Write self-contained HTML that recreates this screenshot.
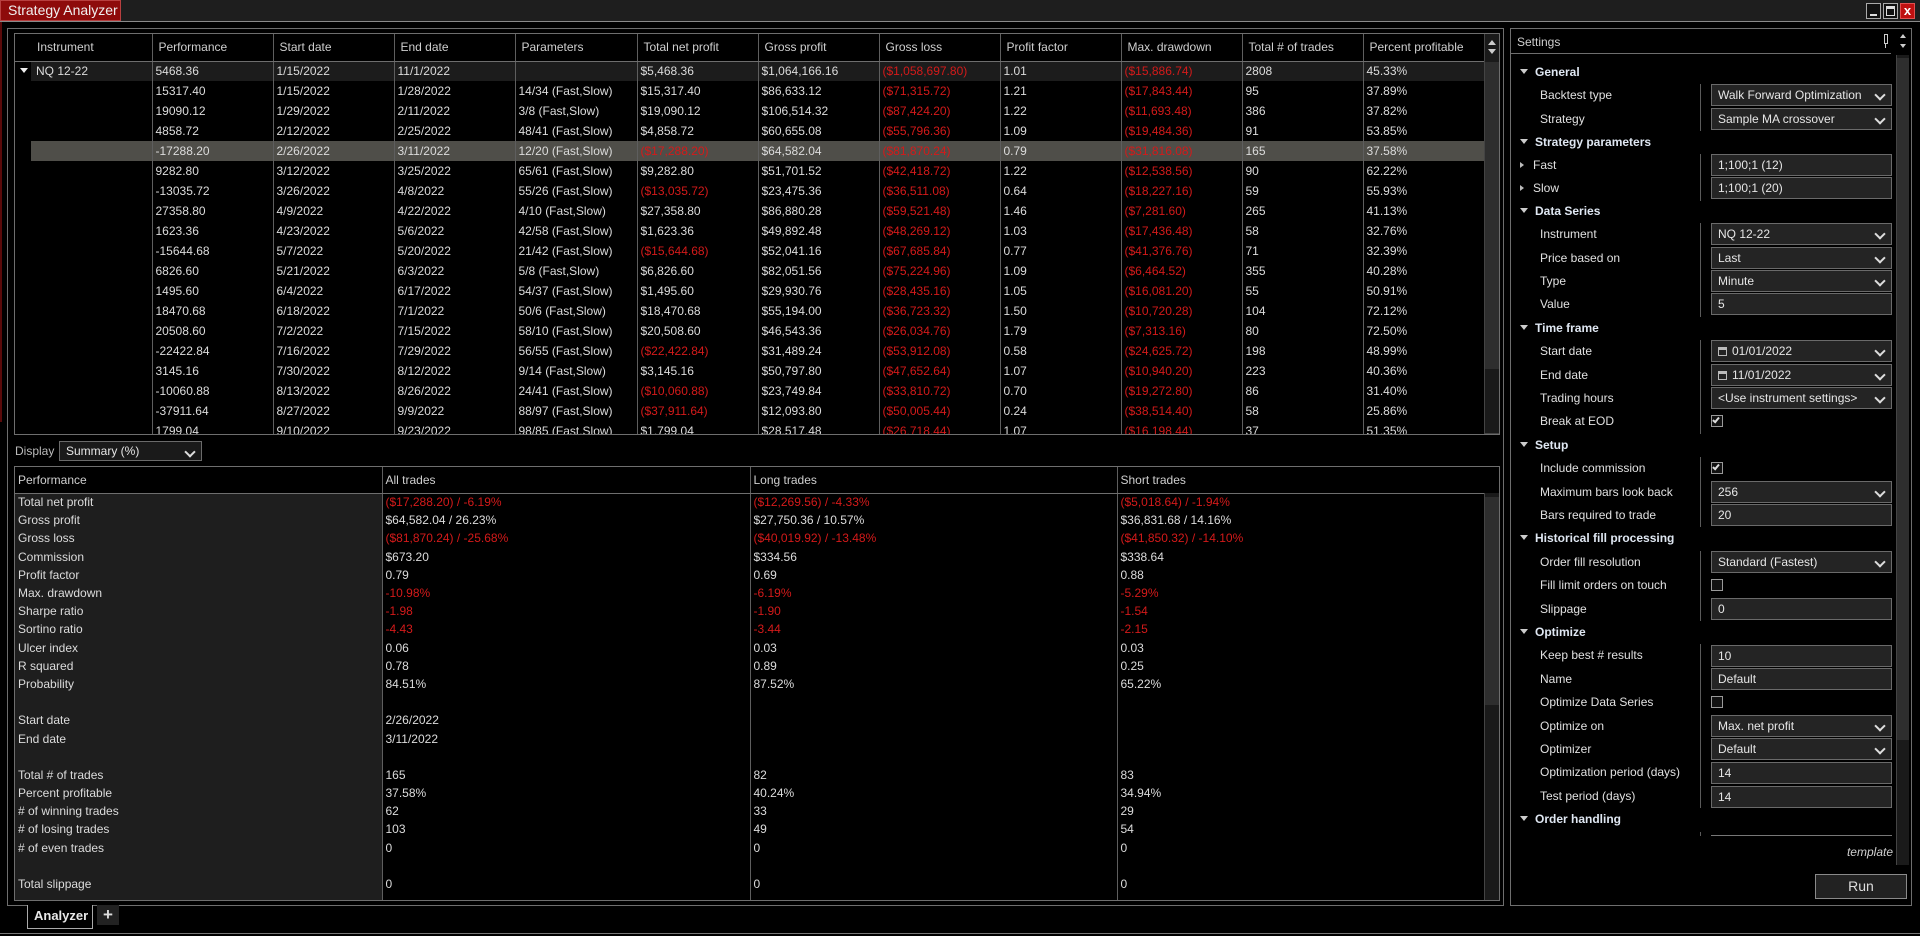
<!DOCTYPE html>
<html><head><meta charset="utf-8"><style>
*{box-sizing:border-box;margin:0;padding:0}
body{width:1920px;height:936px;background:#000;font-family:"Liberation Sans",Arial,sans-serif;font-size:12px;color:#dcdcdc;position:relative;overflow:hidden}
.abs{position:absolute}
.titlebar{left:0;top:0;width:1920px;height:22px;background:#1e1e1e;border-bottom:1px solid #8a8a8a}
.tab{left:0;top:0;width:121px;height:21px;background:#8e0b0b;border:1px solid #b84040;color:#f0f0f0;font-size:14px;line-height:19px;padding-left:7px}
.wb{top:3px;width:15px;height:16px;border:1px solid #aaa;background:#111}
.frame{border:1px solid #6e6e6e}
table{border-collapse:collapse;table-layout:fixed}
td{white-space:nowrap;overflow:hidden;padding-left:3px;border-left:1px solid #5e5e5e}
td:first-child{border-left:none}
.tt tr{height:20px}
.tt thead tr{height:27px}
.tt th{font-weight:normal;text-align:left;color:#cfcfcf;padding-left:6px;border-left:1px solid #5e5e5e;border-bottom:1px solid #6e6e6e}
.tt th:first-child{border-left:none;padding-left:22px}
.r{color:#d41a1a}
.first td{background:#1c1c1c}
.first td:first-child{background:linear-gradient(90deg,#000 16px,#1c1c1c 16px)}
.sel td{background:#4f4e49}
.sel td:first-child{background:linear-gradient(90deg,#000 16px,#4f4e49 16px)}
.bt tr{height:18.2px}
.bt thead tr{height:26px}
.bt th{font-weight:normal;text-align:left;color:#cfcfcf;padding-left:3px;border-left:1px solid #5e5e5e;border-bottom:1px solid #6e6e6e}
.bt th:first-child{border-left:none}
.bt td:first-child{padding-left:3px}
.sb{background:#1a1a1a;border-left:1px solid #444}
.thumb{background:#2e2e2e}
.sec{left:1520px;color:#dfe7f2;font-weight:bold;height:20px;line-height:20px}
.sec:before{content:"";display:inline-block;border-left:4px solid transparent;border-right:4px solid transparent;border-top:5px solid #ccc;margin-right:7px;vertical-align:2px}
.lab{left:1540px;height:20px;line-height:20px;color:#e0e0e0}
.inp{left:1711px;width:181px;height:22px;background:#242424;border:1px solid #6a6a6a;line-height:20px;padding-left:6px;color:#e6e6e6}
.sel2:after{content:"";position:absolute;right:7px;top:6px;width:6px;height:6px;border-right:2px solid #ddd;border-bottom:2px solid #ddd;transform:rotate(45deg)}
.cb{left:1711px;width:12px;height:12px;border:1px solid #999;background:#111}
.vs{left:1700px;width:1px;background:#5a5a5a}
.cal{display:inline-block;width:9px;height:9px;border:1px solid #bbb;border-top:3px solid #bbb;margin-right:5px;vertical-align:-1px}
</style></head><body>
<div class="abs titlebar"></div>
<div class="abs tab">Strategy Analyzer</div>
<div class="abs wb" style="left:1866px"><div class="abs" style="left:3px;top:10px;width:7px;height:2px;background:#ddd"></div></div>
<div class="abs wb" style="left:1883px"><div class="abs" style="left:2px;top:2px;width:9px;height:10px;border:1px solid #ddd;border-top:3px solid #ddd"></div></div>
<div class="abs wb" style="left:1900px;background:#c01010;border-color:#e05050;color:#fff;font-weight:bold;font-size:13px;line-height:14px;text-align:center">x</div>
<div class="abs" style="left:0;top:22px;width:2px;height:400px;background:#5a0a0a"></div>

<!-- left panel -->
<div class="abs frame" style="left:7px;top:28px;width:1497px;height:878px"></div>
<div class="abs frame" style="left:14px;top:33px;width:1486px;height:402px;overflow:hidden">
<table class="tt" style="width:1469px">
<colgroup><col style="width:137px"><col style="width:121px"><col style="width:121px"><col style="width:121px"><col style="width:122px"><col style="width:121px"><col style="width:121px"><col style="width:121px"><col style="width:121px"><col style="width:121px"><col style="width:121px"><col style="width:121px"></colgroup>
<thead><tr><th>Instrument</th><th>Performance</th><th>Start date</th><th>End date</th><th>Parameters</th><th>Total net profit</th><th>Gross profit</th><th>Gross loss</th><th>Profit factor</th><th>Max. drawdown</th><th>Total # of trades</th><th>Percent profitable</th></tr></thead>
<tbody>
<tr class="first"><td style="padding-left:5px"><span style="display:inline-block;border-left:4px solid transparent;border-right:4px solid transparent;border-top:5px solid #eee;margin-right:8px;vertical-align:2px"></span>NQ 12-22</td><td>5468.36</td><td>1/15/2022</td><td>11/1/2022</td><td></td><td>$5,468.36</td><td>$1,064,166.16</td><td class="r">($1,058,697.80)</td><td>1.01</td><td class="r">($15,886.74)</td><td>2808</td><td>45.33%</td></tr>
<tr><td></td><td>15317.40</td><td>1/15/2022</td><td>1/28/2022</td><td>14/34 (Fast,Slow)</td><td>$15,317.40</td><td>$86,633.12</td><td class="r">($71,315.72)</td><td>1.21</td><td class="r">($17,843.44)</td><td>95</td><td>37.89%</td></tr>
<tr><td></td><td>19090.12</td><td>1/29/2022</td><td>2/11/2022</td><td>3/8 (Fast,Slow)</td><td>$19,090.12</td><td>$106,514.32</td><td class="r">($87,424.20)</td><td>1.22</td><td class="r">($11,693.48)</td><td>386</td><td>37.82%</td></tr>
<tr><td></td><td>4858.72</td><td>2/12/2022</td><td>2/25/2022</td><td>48/41 (Fast,Slow)</td><td>$4,858.72</td><td>$60,655.08</td><td class="r">($55,796.36)</td><td>1.09</td><td class="r">($19,484.36)</td><td>91</td><td>53.85%</td></tr>
<tr class="sel"><td></td><td>-17288.20</td><td>2/26/2022</td><td>3/11/2022</td><td>12/20 (Fast,Slow)</td><td class="r">($17,288.20)</td><td>$64,582.04</td><td class="r">($81,870.24)</td><td>0.79</td><td class="r">($31,816.08)</td><td>165</td><td>37.58%</td></tr>
<tr><td></td><td>9282.80</td><td>3/12/2022</td><td>3/25/2022</td><td>65/61 (Fast,Slow)</td><td>$9,282.80</td><td>$51,701.52</td><td class="r">($42,418.72)</td><td>1.22</td><td class="r">($12,538.56)</td><td>90</td><td>62.22%</td></tr>
<tr><td></td><td>-13035.72</td><td>3/26/2022</td><td>4/8/2022</td><td>55/26 (Fast,Slow)</td><td class="r">($13,035.72)</td><td>$23,475.36</td><td class="r">($36,511.08)</td><td>0.64</td><td class="r">($18,227.16)</td><td>59</td><td>55.93%</td></tr>
<tr><td></td><td>27358.80</td><td>4/9/2022</td><td>4/22/2022</td><td>4/10 (Fast,Slow)</td><td>$27,358.80</td><td>$86,880.28</td><td class="r">($59,521.48)</td><td>1.46</td><td class="r">($7,281.60)</td><td>265</td><td>41.13%</td></tr>
<tr><td></td><td>1623.36</td><td>4/23/2022</td><td>5/6/2022</td><td>42/58 (Fast,Slow)</td><td>$1,623.36</td><td>$49,892.48</td><td class="r">($48,269.12)</td><td>1.03</td><td class="r">($17,436.48)</td><td>58</td><td>32.76%</td></tr>
<tr><td></td><td>-15644.68</td><td>5/7/2022</td><td>5/20/2022</td><td>21/42 (Fast,Slow)</td><td class="r">($15,644.68)</td><td>$52,041.16</td><td class="r">($67,685.84)</td><td>0.77</td><td class="r">($41,376.76)</td><td>71</td><td>32.39%</td></tr>
<tr><td></td><td>6826.60</td><td>5/21/2022</td><td>6/3/2022</td><td>5/8 (Fast,Slow)</td><td>$6,826.60</td><td>$82,051.56</td><td class="r">($75,224.96)</td><td>1.09</td><td class="r">($6,464.52)</td><td>355</td><td>40.28%</td></tr>
<tr><td></td><td>1495.60</td><td>6/4/2022</td><td>6/17/2022</td><td>54/37 (Fast,Slow)</td><td>$1,495.60</td><td>$29,930.76</td><td class="r">($28,435.16)</td><td>1.05</td><td class="r">($16,081.20)</td><td>55</td><td>50.91%</td></tr>
<tr><td></td><td>18470.68</td><td>6/18/2022</td><td>7/1/2022</td><td>50/6 (Fast,Slow)</td><td>$18,470.68</td><td>$55,194.00</td><td class="r">($36,723.32)</td><td>1.50</td><td class="r">($10,720.28)</td><td>104</td><td>72.12%</td></tr>
<tr><td></td><td>20508.60</td><td>7/2/2022</td><td>7/15/2022</td><td>58/10 (Fast,Slow)</td><td>$20,508.60</td><td>$46,543.36</td><td class="r">($26,034.76)</td><td>1.79</td><td class="r">($7,313.16)</td><td>80</td><td>72.50%</td></tr>
<tr><td></td><td>-22422.84</td><td>7/16/2022</td><td>7/29/2022</td><td>56/55 (Fast,Slow)</td><td class="r">($22,422.84)</td><td>$31,489.24</td><td class="r">($53,912.08)</td><td>0.58</td><td class="r">($24,625.72)</td><td>198</td><td>48.99%</td></tr>
<tr><td></td><td>3145.16</td><td>7/30/2022</td><td>8/12/2022</td><td>9/14 (Fast,Slow)</td><td>$3,145.16</td><td>$50,797.80</td><td class="r">($47,652.64)</td><td>1.07</td><td class="r">($10,940.20)</td><td>223</td><td>40.36%</td></tr>
<tr><td></td><td>-10060.88</td><td>8/13/2022</td><td>8/26/2022</td><td>24/41 (Fast,Slow)</td><td class="r">($10,060.88)</td><td>$23,749.84</td><td class="r">($33,810.72)</td><td>0.70</td><td class="r">($19,272.80)</td><td>86</td><td>31.40%</td></tr>
<tr><td></td><td>-37911.64</td><td>8/27/2022</td><td>9/9/2022</td><td>88/97 (Fast,Slow)</td><td class="r">($37,911.64)</td><td>$12,093.80</td><td class="r">($50,005.44)</td><td>0.24</td><td class="r">($38,514.40)</td><td>58</td><td>25.86%</td></tr>
<tr><td></td><td>1799.04</td><td>9/10/2022</td><td>9/23/2022</td><td>98/85 (Fast,Slow)</td><td>$1,799.04</td><td>$28,517.48</td><td class="r">($26,718.44)</td><td>1.07</td><td class="r">($16,198.44)</td><td>37</td><td>51.35%</td></tr>
</tbody></table>
<div class="abs sb" style="left:1469px;top:0;width:15px;height:400px;border-bottom:1px solid #444"></div>
<div class="abs thumb" style="left:1470px;top:28px;width:14px;height:307px"></div>
<div class="abs" style="left:1473px;top:6px;border-left:4px solid transparent;border-right:4px solid transparent;border-bottom:5px solid #ccc"></div>
<div class="abs" style="left:1473px;top:15px;border-left:4px solid transparent;border-right:4px solid transparent;border-top:5px solid #ccc"></div>
</div>

<div class="abs" style="left:15px;top:443px;color:#bbb;line-height:16px">Display</div>
<div class="abs inp sel2" style="left:59px;top:441px;width:143px;height:20px;line-height:18px;background:#1a1a1a">Summary (%)</div>

<div class="abs frame" style="left:14px;top:466px;width:1486px;height:435px;overflow:hidden">
<div class="abs" style="left:0;top:0;width:367px;height:435px;background:#1e1e1e"></div>
<table class="bt abs" style="left:0;top:0;width:1469px">
<colgroup><col style="width:367px"><col style="width:368px"><col style="width:367px"><col style="width:367px"></colgroup>
<thead><tr style="background:#000"><th>Performance</th><th>All trades</th><th>Long trades</th><th>Short trades</th></tr></thead>
<tbody>
<tr><td>Total net profit</td><td class="r">($17,288.20) / -6.19%</td><td class="r">($12,269.56) / -4.33%</td><td class="r">($5,018.64) / -1.94%</td></tr>
<tr><td>Gross profit</td><td>$64,582.04 / 26.23%</td><td>$27,750.36 / 10.57%</td><td>$36,831.68 / 14.16%</td></tr>
<tr><td>Gross loss</td><td class="r">($81,870.24) / -25.68%</td><td class="r">($40,019.92) / -13.48%</td><td class="r">($41,850.32) / -14.10%</td></tr>
<tr><td>Commission</td><td>$673.20</td><td>$334.56</td><td>$338.64</td></tr>
<tr><td>Profit factor</td><td>0.79</td><td>0.69</td><td>0.88</td></tr>
<tr><td>Max. drawdown</td><td class="r">-10.98%</td><td class="r">-6.19%</td><td class="r">-5.29%</td></tr>
<tr><td>Sharpe ratio</td><td class="r">-1.98</td><td class="r">-1.90</td><td class="r">-1.54</td></tr>
<tr><td>Sortino ratio</td><td class="r">-4.43</td><td class="r">-3.44</td><td class="r">-2.15</td></tr>
<tr><td>Ulcer index</td><td>0.06</td><td>0.03</td><td>0.03</td></tr>
<tr><td>R squared</td><td>0.78</td><td>0.89</td><td>0.25</td></tr>
<tr><td>Probability</td><td>84.51%</td><td>87.52%</td><td>65.22%</td></tr>
<tr><td></td><td></td><td></td><td></td></tr>
<tr><td>Start date</td><td>2/26/2022</td><td></td><td></td></tr>
<tr><td>End date</td><td>3/11/2022</td><td></td><td></td></tr>
<tr><td></td><td></td><td></td><td></td></tr>
<tr><td>Total # of trades</td><td>165</td><td>82</td><td>83</td></tr>
<tr><td>Percent profitable</td><td>37.58%</td><td>40.24%</td><td>34.94%</td></tr>
<tr><td># of winning trades</td><td>62</td><td>33</td><td>29</td></tr>
<tr><td># of losing trades</td><td>103</td><td>49</td><td>54</td></tr>
<tr><td># of even trades</td><td>0</td><td>0</td><td>0</td></tr>
<tr><td></td><td></td><td></td><td></td></tr>
<tr><td>Total slippage</td><td>0</td><td>0</td><td>0</td></tr>
<tr style="height:20px"><td></td><td></td><td></td><td></td></tr>
</tbody></table>
<div class="abs sb" style="left:1469px;top:26px;width:15px;height:409px"></div>
<div class="abs thumb" style="left:1470px;top:30px;width:14px;height:208px"></div>
</div>

<div class="abs" style="left:27px;top:905px;width:66px;height:24px;border:1px solid #aaa;border-top:none;background:#000;color:#e8e8e8;font-weight:bold;font-size:13px;line-height:22px;padding-left:6px">Analyzer</div>
<div class="abs" style="left:97px;top:905px;width:22px;height:20px;background:#222;color:#ddd;font-size:17px;line-height:19px;text-align:center;font-weight:bold">+</div>
<div class="abs" style="left:0;top:933px;width:1920px;height:1px;background:#777"></div>

<!-- settings -->
<div class="abs frame" style="left:1510px;top:28px;width:402px;height:878px"></div>
<div class="abs" style="left:1511px;top:29px;width:380px;height:25px;border-bottom:1px solid #6e6e6e;color:#cfcfcf;line-height:26px;padding-left:6px">Settings</div>
<div class="abs" style="left:1884px;top:34px;width:4px;height:10px;border:1px solid #ccc"></div>
<div class="abs" style="left:1885px;top:44px;width:1px;height:4px;background:#ccc"></div>
<div class="abs" style="left:1900px;top:34px;border-left:3px solid transparent;border-right:3px solid transparent;border-bottom:4px solid #ccc"></div>
<div class="abs" style="left:1900px;top:44px;border-left:3px solid transparent;border-right:3px solid transparent;border-top:4px solid #ccc"></div>
<div class="abs sb" style="left:1896px;top:55px;width:13px;height:810px"></div>
<div class="abs thumb" style="left:1897px;top:58px;width:12px;height:682px"></div>

<div class="abs sec" style="top:62px">General</div>
<div class="abs vs" style="top:84px;height:47px"></div>
<div class="abs lab" style="top:85px">Backtest type</div><div class="abs inp sel2" style="top:84px">Walk Forward Optimization</div>
<div class="abs lab" style="top:109px">Strategy</div><div class="abs inp sel2" style="top:108px">Sample MA crossover</div>
<div class="abs sec" style="top:132px">Strategy parameters</div>
<div class="abs vs" style="top:154px;height:47px"></div>
<div class="abs lab" style="left:1520px;top:155px"><span style="display:inline-block;border-top:3px solid transparent;border-bottom:3px solid transparent;border-left:4px solid #bbb;margin-right:9px;vertical-align:1px"></span>Fast</div><div class="abs inp" style="top:154px">1;100;1 (12)</div>
<div class="abs lab" style="left:1520px;top:178px"><span style="display:inline-block;border-top:3px solid transparent;border-bottom:3px solid transparent;border-left:4px solid #bbb;margin-right:9px;vertical-align:1px"></span>Slow</div><div class="abs inp" style="top:177px">1;100;1 (20)</div>
<div class="abs sec" style="top:201px">Data Series</div>
<div class="abs vs" style="top:223px;height:94px"></div>
<div class="abs lab" style="top:224px">Instrument</div><div class="abs inp sel2" style="top:223px">NQ 12-22</div>
<div class="abs lab" style="top:248px">Price based on</div><div class="abs inp sel2" style="top:247px">Last</div>
<div class="abs lab" style="top:271px">Type</div><div class="abs inp sel2" style="top:270px">Minute</div>
<div class="abs lab" style="top:294px">Value</div><div class="abs inp" style="top:293px">5</div>
<div class="abs sec" style="top:318px">Time frame</div>
<div class="abs vs" style="top:340px;height:94px"></div>
<div class="abs lab" style="top:341px">Start date</div><div class="abs inp sel2" style="top:340px"><span class="cal"></span>01/01/2022</div>
<div class="abs lab" style="top:365px">End date</div><div class="abs inp sel2" style="top:364px"><span class="cal"></span>11/01/2022</div>
<div class="abs lab" style="top:388px">Trading hours</div><div class="abs inp sel2" style="top:387px">&lt;Use instrument settings&gt;</div>
<div class="abs lab" style="top:411px">Break at EOD</div><div class="abs cb" style="top:415px"><div class="abs" style="left:2px;top:0px;width:4px;height:7px;border-right:2px solid #ddd;border-bottom:2px solid #ddd;transform:rotate(40deg)"></div></div>
<div class="abs sec" style="top:435px">Setup</div>
<div class="abs vs" style="top:457px;height:70px"></div>
<div class="abs lab" style="top:458px">Include commission</div><div class="abs cb" style="top:462px"><div class="abs" style="left:2px;top:0px;width:4px;height:7px;border-right:2px solid #ddd;border-bottom:2px solid #ddd;transform:rotate(40deg)"></div></div>
<div class="abs lab" style="top:482px">Maximum bars look back</div><div class="abs inp sel2" style="top:481px">256</div>
<div class="abs lab" style="top:505px">Bars required to trade</div><div class="abs inp" style="top:504px">20</div>
<div class="abs sec" style="top:528px">Historical fill processing</div>
<div class="abs vs" style="top:551px;height:70px"></div>
<div class="abs lab" style="top:552px">Order fill resolution</div><div class="abs inp sel2" style="top:551px">Standard (Fastest)</div>
<div class="abs lab" style="top:575px">Fill limit orders on touch</div><div class="abs cb" style="top:579px"></div>
<div class="abs lab" style="top:599px">Slippage</div><div class="abs inp" style="top:598px">0</div>
<div class="abs sec" style="top:622px">Optimize</div>
<div class="abs vs" style="top:644px;height:164px"></div>
<div class="abs lab" style="top:645px">Keep best # results</div><div class="abs inp" style="top:645px">10</div>
<div class="abs lab" style="top:669px">Name</div><div class="abs inp" style="top:668px">Default</div>
<div class="abs lab" style="top:692px">Optimize Data Series</div><div class="abs cb" style="top:696px"></div>
<div class="abs lab" style="top:716px">Optimize on</div><div class="abs inp sel2" style="top:715px">Max. net profit</div>
<div class="abs lab" style="top:739px">Optimizer</div><div class="abs inp sel2" style="top:738px">Default</div>
<div class="abs lab" style="top:762px">Optimization period (days)</div><div class="abs inp" style="top:762px">14</div>
<div class="abs lab" style="top:786px">Test period (days)</div><div class="abs inp" style="top:786px">14</div>
<div class="abs sec" style="top:809px">Order handling</div>
<div class="abs" style="left:1711px;top:835px;width:181px;height:1px;background:#777"></div>
<div class="abs vs" style="top:832px;height:4px"></div>
<div class="abs" style="left:1800px;top:845px;width:93px;text-align:right;font-style:italic;color:#cfcfcf">template</div>
<div class="abs" style="left:1815px;top:874px;width:92px;height:25px;border:1px solid #8a8a8a;background:#222;color:#ddd;font-size:14px;text-align:center;line-height:23px">Run</div>
</body></html>
